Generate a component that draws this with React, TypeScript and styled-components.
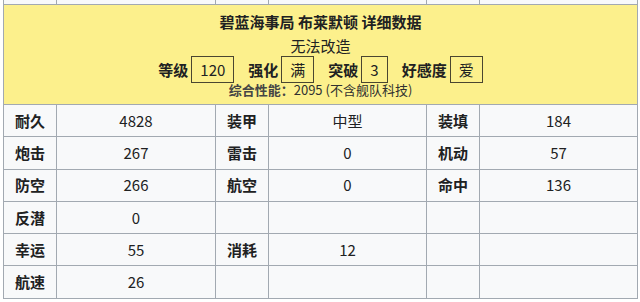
import React from 'react';
import styled, { createGlobalStyle } from 'styled-components';

const GlobalStyle = createGlobalStyle`
    body {
        margin: 0;
        background: #ffffff;
        font-family: "Noto Sans CJK SC", "Noto Sans", sans-serif;
        color: #202122;
    }
`;

type Stat = { label: string; value: string };

const statRows: Stat[][] = [
    [{ label: '耐久', value: '4828' }, { label: '装甲', value: '中型' }, { label: '装填', value: '184' }],
    [{ label: '炮击', value: '267' }, { label: '雷击', value: '0' }, { label: '机动', value: '57' }],
    [{ label: '防空', value: '266' }, { label: '航空', value: '0' }, { label: '命中', value: '136' }],
    [{ label: '反潜', value: '0' }, { label: '', value: '' }, { label: '', value: '' }],
    [{ label: '幸运', value: '55' }, { label: '消耗', value: '12' }, { label: '', value: '' }],
    [{ label: '航速', value: '26' }, { label: '', value: '' }, { label: '', value: '' }],
];

const headStats: Stat[] = [
    { label: '等级', value: '120' },
    { label: '强化', value: '满' },
    { label: '突破', value: '3' },
    { label: '好感度', value: '爱' },
];

const Page = styled.div`
    padding: 0 3px;
    width: 640px;
    box-sizing: border-box;
`;

const Table = styled.table`
    width: 634px;
    border-collapse: collapse;
    table-layout: fixed;
    background: #f8f9fa;
    font-size: 15px;
`;

const Col = styled.col<{ $w: number }>`
    width: ${(p) => p.$w}px;
`;

// each stat row is ~32.3px tall in the screenshot
const Cell = styled.td<{ $label?: boolean }>`
    border: 1px solid #a2a9b1;
    height: 31.3px;
    padding: 0;
    text-align: center;
    font-weight: ${(p) => (p.$label ? 700 : 400)};
    line-height: 20px;
`;

const StubCell = styled.td`
    border: 1px solid #a2a9b1;
    border-top: none;
    height: 4px;
    padding: 0;
`;

const HeadCell = styled.td`
    border: 1px solid #a2a9b1;
    background: #fcf08c;
    padding: 5px 0 4px;
    text-align: center;
`;

const Title = styled.div`
    font-weight: 700;
    line-height: 24px;
`;

const Sub = styled.div`
    line-height: 24px;
`;

const StatLine = styled.div`
    display: flex;
    justify-content: center;
    align-items: center;
    gap: 14px;
    height: 22px;
`;

const StatPair = styled.div`
    display: flex;
    align-items: center;
    gap: 3px;
`;

const StatName = styled.span`
    font-weight: 700;
`;

const StatBox = styled.span`
    display: inline-block;
    box-sizing: border-box;
    height: 27px;
    padding: 0 8px;
    border: 1px solid #4a4630;
    line-height: 25px;
    text-align: center;
`;

const Perf = styled.div`
    font-size: 13px;
    line-height: 20px;
    color: #303030;
`;

const PerfLabel = styled.span`
    font-weight: 700;
    color: #454545;
`;

export default function App() {
    return (
        <Page>
            <GlobalStyle />
            <Table>
                <colgroup>
                    <Col $w={53} />
                    <Col $w={159} />
                    <Col $w={53} />
                    <Col $w={158} />
                    <Col $w={53} />
                    <Col $w={158} />
                </colgroup>
                <tbody>
                    <tr>
                        {Array.from({ length: 6 }).map((_, i) => (
                            <StubCell key={i} />
                        ))}
                    </tr>
                    <tr>
                        <HeadCell colSpan={6}>
                            <Title>碧蓝海事局 布莱默顿 详细数据</Title>
                            <Sub>无法改造</Sub>
                            <StatLine>
                                {headStats.map((s) => (
                                    <StatPair key={s.label}>
                                        <StatName>{s.label}</StatName>
                                        <StatBox>{s.value}</StatBox>
                                    </StatPair>
                                ))}
                            </StatLine>
                            <Perf>
                                <PerfLabel>综合性能：</PerfLabel>2095 (不含舰队科技)
                            </Perf>
                        </HeadCell>
                    </tr>
                    {statRows.map((row, r) => (
                        <tr key={r}>
                            {row.map((s, i) => (
                                <React.Fragment key={i}>
                                    <Cell $label>{s.label}</Cell>
                                    <Cell>{s.value}</Cell>
                                </React.Fragment>
                            ))}
                        </tr>
                    ))}
                </tbody>
            </Table>
        </Page>
    );
}
